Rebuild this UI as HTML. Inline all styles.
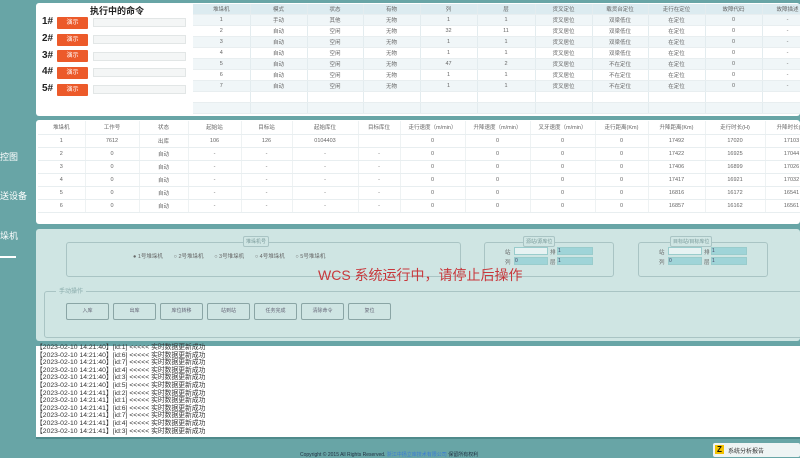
<!DOCTYPE html>
<html><head><meta charset="utf-8"><style>
*{margin:0;padding:0;box-sizing:border-box}
body{width:800px;height:458px;overflow:hidden;background:#68a5a6;font-family:"Liberation Sans","Noto Sans CJK SC",sans-serif;position:relative;color:#555}
.a{position:absolute}
.panel{position:absolute;background:#fff;border-radius:3px}
table{border-collapse:collapse;font-size:5.5px;color:#666;table-layout:fixed}
td{text-align:center;border-right:1px solid #e3ecef;border-bottom:1px solid #e8eef0;white-space:nowrap;overflow:hidden}
.t1 td{height:11px}
.t1 tr:nth-child(even) td{background:#f0f6f8}
.t1 tr.h td{background:#dcebf0;height:10px}
.t2 td{height:13px;border-right:1px solid #eef2f3}
.lbl{font-size:10px;font-weight:bold;color:#222}
.btn{position:absolute;width:31px;height:12px;background:#ec5a2a;color:#fff;font-size:6px;text-align:center;line-height:12px;border-radius:1px}
.inp{position:absolute;width:93px;height:9px;background:#f4f6f6;border:1px solid #e2e6e6}
.fs{position:absolute;border:1px solid #a9c4c4;border-radius:3px}
.lg{position:absolute;font-size:5px;color:#7a9a9a;background:#d0e6e4;border:1px solid #a9c4c4;border-radius:2px;padding:1px 2px}
.mb{position:absolute;top:303px;width:43px;height:17px;border:1px solid #8aa5a5;border-radius:2px;font-size:5px;text-align:center;line-height:15px;color:#667}
.log{font-size:6.8px;line-height:7.6px;color:#333;white-space:nowrap}
.sm{font-size:5.5px;color:#666}
.bx{position:absolute;height:8px;border:1px solid #9cc;background:#9fd4d8;font-size:5px;line-height:6px;color:#446}
</style></head><body>

<div class="a" style="left:0;top:150px;color:#fff;font-size:9px">控图</div>
<div class="a" style="left:0;top:189px;color:#fff;font-size:9px">送设备</div>
<div class="a" style="left:0;top:229px;color:#fff;font-size:9px">垛机</div>
<div class="a" style="left:0;top:256px;width:16px;height:2px;background:#fff"></div>

<div class="panel" style="left:36px;top:3px;width:764px;height:113px"></div>
<div class="a lbl" style="left:90px;top:4px;font-size:9px">执行中的命令</div>
<div class="a lbl" style="left:42px;top:16px">1#</div><div class="btn" style="left:57px;top:17px">演示</div><div class="inp" style="left:93px;top:18px"></div>
<div class="a lbl" style="left:42px;top:33px">2#</div><div class="btn" style="left:57px;top:34px">演示</div><div class="inp" style="left:93px;top:35px"></div>
<div class="a lbl" style="left:42px;top:50px">3#</div><div class="btn" style="left:57px;top:50px">演示</div><div class="inp" style="left:93px;top:52px"></div>
<div class="a lbl" style="left:42px;top:66px">4#</div><div class="btn" style="left:57px;top:67px">演示</div><div class="inp" style="left:93px;top:68px"></div>
<div class="a lbl" style="left:42px;top:83px">5#</div><div class="btn" style="left:57px;top:84px">演示</div><div class="inp" style="left:93px;top:85px"></div>

<table class="t1 a" style="left:193px;top:4px;width:620px">
<colgroup><col style="width:57px"><col style="width:57px"><col style="width:56px"><col style="width:57px"><col style="width:57px"><col style="width:58px"><col style="width:57px"><col style="width:56px"><col style="width:57px"><col style="width:57px"><col style="width:51px"></colgroup>
<tr class="h"><td>堆垛机</td><td>模式</td><td>状态</td><td>有物</td><td>列</td><td>层</td><td>货叉定位</td><td>载货台定位</td><td>走行在定位</td><td>故障代码</td><td>故障描述</td></tr>
<tr><td>1</td><td>手动</td><td>其他</td><td>无物</td><td>1</td><td>1</td><td>货叉居位</td><td>双梁低位</td><td>在定位</td><td>0</td><td>-</td></tr>
<tr><td>2</td><td>自动</td><td>空闲</td><td>无物</td><td>32</td><td>11</td><td>货叉居位</td><td>双梁低位</td><td>在定位</td><td>0</td><td>-</td></tr>
<tr><td>3</td><td>自动</td><td>空闲</td><td>无物</td><td>1</td><td>1</td><td>货叉居位</td><td>双梁低位</td><td>在定位</td><td>0</td><td>-</td></tr>
<tr><td>4</td><td>自动</td><td>空闲</td><td>无物</td><td>1</td><td>1</td><td>货叉居位</td><td>双梁低位</td><td>在定位</td><td>0</td><td>-</td></tr>
<tr><td>5</td><td>自动</td><td>空闲</td><td>无物</td><td>47</td><td>2</td><td>货叉居位</td><td>不在定位</td><td>在定位</td><td>0</td><td>-</td></tr>
<tr><td>6</td><td>自动</td><td>空闲</td><td>无物</td><td>1</td><td>1</td><td>货叉居位</td><td>不在定位</td><td>在定位</td><td>0</td><td>-</td></tr>
<tr><td>7</td><td>自动</td><td>空闲</td><td>无物</td><td>1</td><td>1</td><td>货叉居位</td><td>不在定位</td><td>在定位</td><td>0</td><td>-</td></tr>
<tr><td></td><td></td><td></td><td></td><td></td><td></td><td></td><td></td><td></td><td></td><td></td></tr>
<tr><td></td><td></td><td></td><td></td><td></td><td></td><td></td><td></td><td></td><td></td><td></td></tr>
</table>

<div class="panel" style="left:36px;top:120px;width:764px;height:104px"></div>
<table class="t2 a" style="left:38px;top:121px;width:780px">
<colgroup><col style="width:47px"><col style="width:54px"><col style="width:49px"><col style="width:53px"><col style="width:51px"><col style="width:66px"><col style="width:42px"><col style="width:65px"><col style="width:65px"><col style="width:65px"><col style="width:53px"><col style="width:57px"><col style="width:60px"><col style="width:53px"></colgroup>
<tr><td>堆垛机</td><td>工作号</td><td>状态</td><td>起始站</td><td>目标站</td><td>起始库位</td><td>目标库位</td><td>走行速度（m/min）</td><td>升降速度（m/min）</td><td>叉牙速度（m/min）</td><td>走行距离(Km)</td><td>升降距离(Km)</td><td>走行时长(H)</td><td>升降时长(H)</td></tr>
<tr><td>1</td><td>7612</td><td>出库</td><td>106</td><td>126</td><td>0104403</td><td></td><td>0</td><td>0</td><td>0</td><td>0</td><td>17492</td><td>17020</td><td>17103</td></tr>
<tr><td>2</td><td>0</td><td>自动</td><td>-</td><td>-</td><td>-</td><td>-</td><td>0</td><td>0</td><td>0</td><td>0</td><td>17422</td><td>16925</td><td>17044</td></tr>
<tr><td>3</td><td>0</td><td>自动</td><td>-</td><td>-</td><td>-</td><td>-</td><td>0</td><td>0</td><td>0</td><td>0</td><td>17406</td><td>16899</td><td>17026</td></tr>
<tr><td>4</td><td>0</td><td>自动</td><td>-</td><td>-</td><td>-</td><td>-</td><td>0</td><td>0</td><td>0</td><td>0</td><td>17417</td><td>16921</td><td>17032</td></tr>
<tr><td>5</td><td>0</td><td>自动</td><td>-</td><td>-</td><td>-</td><td>-</td><td>0</td><td>0</td><td>0</td><td>0</td><td>16816</td><td>16172</td><td>16541</td></tr>
<tr><td>6</td><td>0</td><td>自动</td><td>-</td><td>-</td><td>-</td><td>-</td><td>0</td><td>0</td><td>0</td><td>0</td><td>16857</td><td>16162</td><td>16561</td></tr>
</table>

<div class="a" style="left:36px;top:229px;width:764px;height:112px;background:#cfe5e3;border-radius:3px"></div>
<div class="fs" style="left:66px;top:242px;width:395px;height:35px"></div>
<div class="lg" style="left:243px;top:236px">堆垛机号</div>
<div class="a sm" style="left:133px;top:252px">● 1号堆垛机 &nbsp;&nbsp;&nbsp;&nbsp;&nbsp;&nbsp;○ 2号堆垛机 &nbsp;&nbsp;&nbsp;&nbsp;&nbsp;&nbsp;○ 3号堆垛机 &nbsp;&nbsp;&nbsp;&nbsp;&nbsp;&nbsp;○ 4号堆垛机 &nbsp;&nbsp;&nbsp;&nbsp;&nbsp;&nbsp;○ 5号堆垛机</div>
<div class="fs" style="left:484px;top:242px;width:130px;height:35px"></div>
<div class="lg" style="left:523px;top:236px">源站/源库位</div>
<div class="a sm" style="left:505px;top:248px">站</div><div class="bx" style="left:514px;top:247px;width:34px;background:#e6f2f2"></div>
<div class="a sm" style="left:550px;top:248px">排</div><div class="bx" style="left:557px;top:247px;width:36px">1</div>
<div class="a sm" style="left:505px;top:258px">列</div><div class="bx" style="left:514px;top:257px;width:34px">0</div>
<div class="a sm" style="left:550px;top:258px">层</div><div class="bx" style="left:557px;top:257px;width:36px">1</div>
<div class="fs" style="left:638px;top:242px;width:130px;height:35px"></div>
<div class="lg" style="left:670px;top:236px">目标站/目标库位</div>
<div class="a sm" style="left:659px;top:248px">站</div><div class="bx" style="left:668px;top:247px;width:34px;background:#e6f2f2"></div>
<div class="a sm" style="left:704px;top:248px">排</div><div class="bx" style="left:711px;top:247px;width:36px">1</div>
<div class="a sm" style="left:659px;top:258px">列</div><div class="bx" style="left:668px;top:257px;width:34px">0</div>
<div class="a sm" style="left:704px;top:258px">层</div><div class="bx" style="left:711px;top:257px;width:36px">1</div>
<div class="fs" style="left:44px;top:291px;width:770px;height:47px"></div>
<div class="a" style="left:56px;top:286px;font-size:6px;color:#8aa;background:#cfe5e3;padding:0 3px">手动操作</div>
<div class="mb" style="left:66px">入库</div><div class="mb" style="left:113px">出库</div><div class="mb" style="left:160px">库位转移</div><div class="mb" style="left:207px">站到站</div><div class="mb" style="left:254px">任务完成</div><div class="mb" style="left:301px">清除命令</div><div class="mb" style="left:348px">复位</div>
<div class="a" style="left:318px;top:265px;font-size:14px;color:#c8383c;white-space:nowrap">WCS 系统运行中，请停止后操作</div>

<div class="a" style="left:36px;top:346px;width:764px;height:91px;background:#fff"></div>
<div class="a log" style="left:36px;top:344px">
【2023-02-10 14:21:40】[id:1] &lt;&lt;&lt;&lt;&lt; 实时数据更新成功<br>
【2023-02-10 14:21:40】[id:6] &lt;&lt;&lt;&lt;&lt; 实时数据更新成功<br>
【2023-02-10 14:21:40】[id:7] &lt;&lt;&lt;&lt;&lt; 实时数据更新成功<br>
【2023-02-10 14:21:40】[id:4] &lt;&lt;&lt;&lt;&lt; 实时数据更新成功<br>
【2023-02-10 14:21:40】[id:3] &lt;&lt;&lt;&lt;&lt; 实时数据更新成功<br>
【2023-02-10 14:21:40】[id:5] &lt;&lt;&lt;&lt;&lt; 实时数据更新成功<br>
【2023-02-10 14:21:41】[id:2] &lt;&lt;&lt;&lt;&lt; 实时数据更新成功<br>
【2023-02-10 14:21:41】[id:1] &lt;&lt;&lt;&lt;&lt; 实时数据更新成功<br>
【2023-02-10 14:21:41】[id:6] &lt;&lt;&lt;&lt;&lt; 实时数据更新成功<br>
【2023-02-10 14:21:41】[id:7] &lt;&lt;&lt;&lt;&lt; 实时数据更新成功<br>
【2023-02-10 14:21:41】[id:4] &lt;&lt;&lt;&lt;&lt; 实时数据更新成功<br>
【2023-02-10 14:21:41】[id:3] &lt;&lt;&lt;&lt;&lt; 实时数据更新成功
</div>
<div class="a" style="left:36px;top:437px;width:764px;height:2px;background:#4f8a8b"></div>
<div class="a" style="left:300px;top:451px;font-size:5px;color:#234;white-space:nowrap">Copyright © 2015 All Rights Reserved. <span style="color:#3a7bd5">浙江中扬立库技术有限公司</span> 保留所有权利</div>
<div class="a" style="left:713px;top:443px;width:87px;height:14px;background:#eef4f4;border-radius:2px"></div>
<div class="a" style="left:715px;top:445px;width:9px;height:9px;background:#f2c200;font-size:8px;font-weight:bold;line-height:9px;text-align:center;color:#111">Z</div>
<div class="a" style="left:728px;top:446px;font-size:6px;color:#333">系统分析报告</div>
</body></html>
